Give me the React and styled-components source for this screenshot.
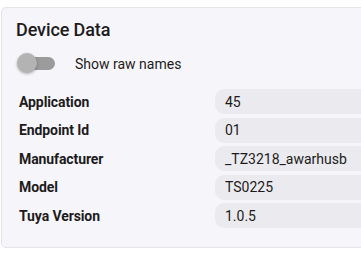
import React, { useState } from "react";
import styled, { createGlobalStyle } from "styled-components";

const GlobalStyle = createGlobalStyle`
  html, body {
    margin: 0;
    padding: 0;
    background: #ffffff;
    overflow: hidden;
  }
  body {
    font-family: Roboto, "Liberation Sans", sans-serif;
    color: #1d1b20;
  }
`;

const Card = styled.section`
  margin: 7px 0 0 1px;
  width: 420px;
  box-sizing: border-box;
  background: #f6f6fa;
  border: 1px solid #e4e4e9;
  border-radius: 5px;
  padding: 12px 0 19px 0;
`;

const Title = styled.h2`
  margin: 0 0 0 14px;
  font-size: 18px;
  font-weight: 500;
  line-height: 20px;
  letter-spacing: -0.1px;
`;

const ToggleRow = styled.label`
  display: flex;
  align-items: center;
  gap: 19px;
  margin: 12px 0 0 14px;
  height: 24px;
  font-size: 14px;
  cursor: pointer;
`;

const Switch = styled.span`
  position: relative;
  width: 40px;
  height: 24px;
  flex-shrink: 0;
`;

const Track = styled.span`
  position: absolute;
  left: 4px;
  top: 5px;
  width: 35px;
  height: 13px;
  border-radius: 7px;
  background: ${(p) => (p.$on ? "#90caf9" : "#9b9b9b")};
`;

const Thumb = styled.span`
  position: absolute;
  left: ${(p) => (p.$on ? "20px" : "1px")};
  top: 1px;
  width: 20px;
  height: 20px;
  border-radius: 50%;
  background: ${(p) => (p.$on ? "#1976d2" : "#b3b3b3")};
  box-shadow: 0 1px 3px rgba(0, 0, 0, 0.3);
  transition: left 0.15s;
`;

const Table = styled.div`
  display: grid;
  grid-template-columns: 196px 1fr;
  row-gap: 3.5px;
  margin-top: 13px;
  padding-left: 17px;
`;

const Label = styled.div`
  display: flex;
  align-items: center;
  height: 25px;
  font-size: 14px;
  font-weight: 700;
  letter-spacing: -0.1px;
`;

const Value = styled.div`
  display: flex;
  align-items: center;
  height: 25px;
  padding-left: 10px;
  background: #ebebef;
  border-radius: 9px 0 0 9px;
  font-size: 14px;
`;

const rows = [
  ["Application", "45"],
  ["Endpoint Id", "01"],
  ["Manufacturer", "_TZ3218_awarhusb"],
  ["Model", "TS0225"],
  ["Tuya Version", "1.0.5"],
];

export default function App() {
  const [raw, setRaw] = useState(false);
  return (
    <>
      <GlobalStyle />
      <Card>
        <Title>Device Data</Title>
        <ToggleRow onClick={() => setRaw(!raw)}>
          <Switch>
            <Track $on={raw} />
            <Thumb $on={raw} />
          </Switch>
          Show raw names
        </ToggleRow>
        <Table>
          {rows.map(([k, v]) => (
            <React.Fragment key={k}>
              <Label>{k}</Label>
              <Value>{v}</Value>
            </React.Fragment>
          ))}
        </Table>
      </Card>
    </>
  );
}
